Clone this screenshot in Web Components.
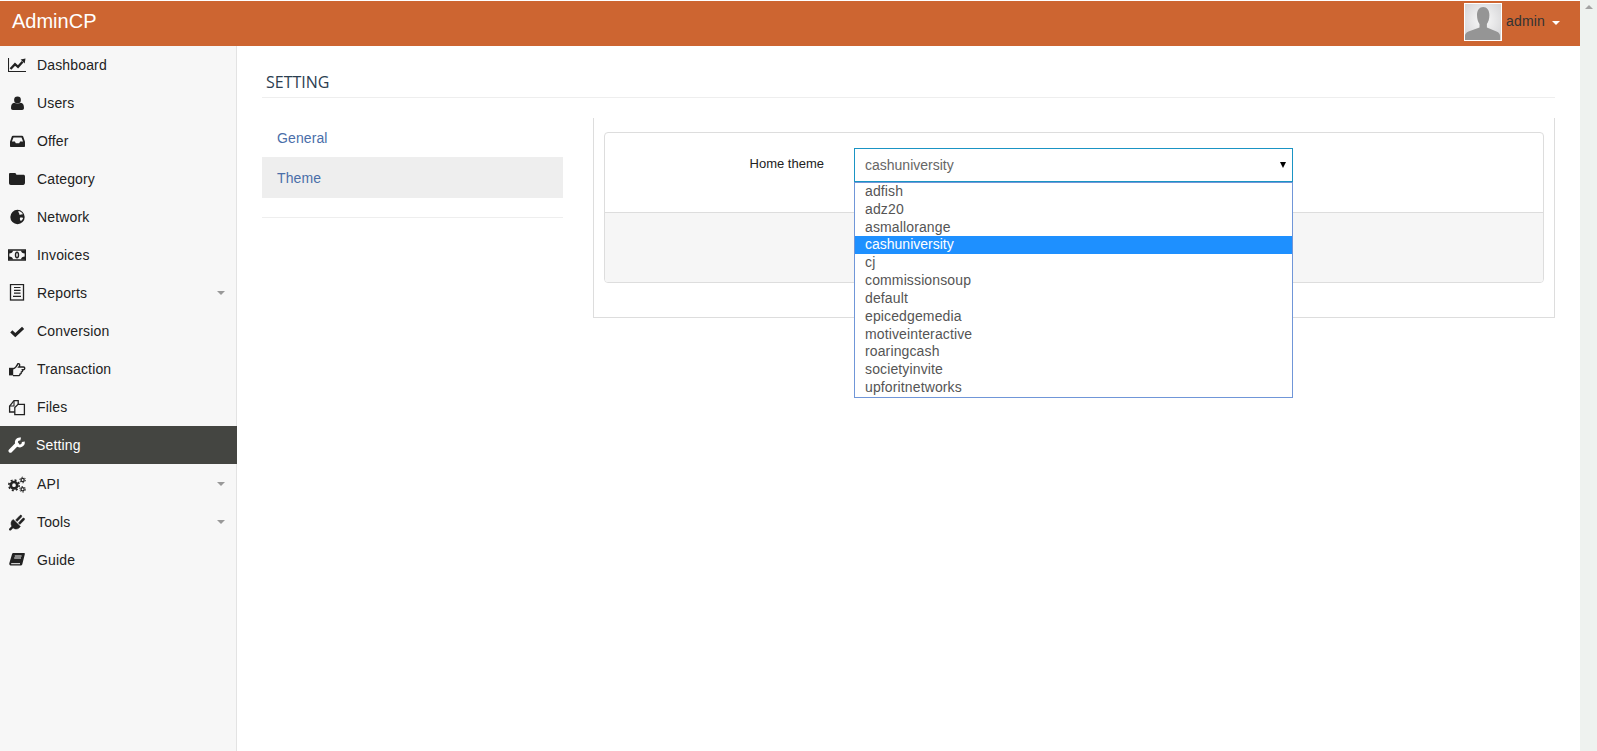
<!DOCTYPE html>
<html>
<head>
<meta charset="utf-8">
<title>AdminCP</title>
<style>
html,body{margin:0;padding:0;height:100%;overflow:hidden;background:#fff;}
body{font-family:"Liberation Sans",Arial,sans-serif;font-size:14px;color:#333;}
</style>
</head>
<body>
<admin-app>
    <admin-header slot="header" brand="AdminCP" user="admin"></admin-header>
    <side-nav slot="nav">
        <nav-item icon="chart">Dashboard</nav-item>
        <nav-item icon="user">Users</nav-item>
        <nav-item icon="inbox">Offer</nav-item>
        <nav-item icon="folder">Category</nav-item>
        <nav-item icon="globe">Network</nav-item>
        <nav-item icon="money">Invoices</nav-item>
        <nav-item icon="list" caret>Reports</nav-item>
        <nav-item icon="check">Conversion</nav-item>
        <nav-item icon="hand">Transaction</nav-item>
        <nav-item icon="files">Files</nav-item>
        <nav-item icon="wrench" active>Setting</nav-item>
        <nav-item icon="gears" caret>API</nav-item>
        <nav-item icon="plug" caret>Tools</nav-item>
        <nav-item icon="book">Guide</nav-item>
    </side-nav>
    <setting-page heading="Setting">
        <setting-tabs slot="tabs">
            <tab-link>General</tab-link>
            <tab-link active>Theme</tab-link>
        </setting-tabs>
        <form-panel>
            <theme-select label="Home theme">
                <theme-option>adfish</theme-option>
                <theme-option>adz20</theme-option>
                <theme-option>asmallorange</theme-option>
                <theme-option selected>cashuniversity</theme-option>
                <theme-option>cj</theme-option>
                <theme-option>commissionsoup</theme-option>
                <theme-option>default</theme-option>
                <theme-option>epicedgemedia</theme-option>
                <theme-option>motiveinteractive</theme-option>
                <theme-option>roaringcash</theme-option>
                <theme-option>societyinvite</theme-option>
                <theme-option>upforitnetworks</theme-option>
            </theme-select>
        </form-panel>
    </setting-page>
</admin-app>

<script>
const ICONS = {
    chart: `<path d="M.5 2v13.500H18" fill="none" stroke="currentColor" stroke-width="1.100"/><path d="M2.500 13 7 8.200l3 2.600 4.600-5" fill="none" stroke="currentColor" stroke-width="2.300"/><path d="M12.600 3.400 17.500 2.400 16.700 7.400z" fill="currentColor"/>`,
    user: `<circle cx="9.500" cy="6" r="3.400" fill="currentColor"/><path d="M3 14c0-3 1.100-5.200 3.200-5.200 1.600 1.100 5 1.100 6.600 0 2.100 0 3.200 2.200 3.200 5.200 0 1.200-.8 2-1.800 2H4.800C3.800 16 3 15.200 3 14z" fill="currentColor"/>`,
    inbox: `<path fill-rule="evenodd" d="M5 3.800h9c.6 0 1 .3 1.200.7l1.800 5.300V14c0 .7-.4 1.100-1.100 1.100H3.100C2.400 15.100 2 14.700 2 14V9.800l1.800-5.300c.2-.4.600-.7 1.200-.7zM5.500 5.500 3.900 9.600h3l.9 1.700h3.400l.9-1.700h3l-1.600-4.100z" fill="currentColor"/>`,
    folder: `<path d="M2.200 3h4.600c.6 0 1 .3 1.200.8l.4.900h6.800c1.200 0 1.800.7 1.800 1.700v6.100c0 1.400-.7 2.500-1.800 2.500H2.800C1.700 15 1 14.300 1 13V4.300C1 3.500 1.500 3 2.200 3z" fill="currentColor"/>`,
    globe: `<circle cx="9.500" cy="9" r="7.200" fill="currentColor"/><path d="M10.300 2.900c1.900.2 3.500 1.300 4.500 3-.5.700-1.100.8-1.700.3-.6.700-1.400.7-1.900 0 .2-.6 0-1.100-.5-1.400-.1-.7-.2-1.300-.4-1.900zM12 9.800c.9-.4 2-.3 3.100.1-.4 1.400-1.100 2.400-2.300 3.200-.8-.8-1.100-2.200-.8-3.300z" fill="var(--icon-paper,#f7f7f7)"/>`,
    money: `<rect x=".6" y="4" width="16.800" height="10" fill="none" stroke="currentColor" stroke-width="1.500"/><path d="M1 4.500h4c0 1.800-1.800 3-4 3zM17 4.500h-4c0 1.800 1.800 3 4 3zM1 13.500h4c0-1.800-1.800-3-4-3zM17 13.500h-4c0-1.800 1.800-3 4-3z" fill="currentColor"/><ellipse cx="9" cy="9" rx="1.500" ry="2.800" fill="none" stroke="currentColor" stroke-width="1.400"/>`,
    list: `<rect x="2.500" y=".5" width="13" height="15.500" fill="none" stroke="currentColor" stroke-width="1.300"/><path d="M6 3.500h6.500M6 6.300h6.500M6 9.100h6.500M5 12.400h8" stroke="currentColor" stroke-width="1.200"/>`,
    check: `<path d="M3.300 9.300l4 3.800 7.800-7.300" fill="none" stroke="currentColor" stroke-width="3.100"/>`,
    hand: `<path d="M1 7.800h4.200v7.600H1z" fill="currentColor"/><path d="M5 8.800C7.300 8 8.900 6 9.900 3.700c2-.5 2.300 1.900 1 3.300h4.600c1.700 0 1.700 2.700 0 2.700h-1.100c.5 1.100 0 2.200-1 2.300.1 1.200-.5 2-1.400 2.100.1 1-.8 1.500-1.700 1.500H5" fill="none" stroke="currentColor" stroke-width="1.400"/>`,
    files: `<path d="M6.800 14H1.600V8.200L6 2.600h4.200v4" fill="none" stroke="currentColor" stroke-width="1.300"/><path d="M6 3v5H1.600" fill="none" stroke="currentColor" stroke-width="1.100"/><path d="M6.800 11.500V9.600L10 6.400h6.400v10.200H6.800z" fill="none" stroke="currentColor" stroke-width="1.300"/>`,
    wrench: `<path d="M2.400 14.800 9 8.200" stroke="currentColor" stroke-width="3.800" stroke-linecap="round"/><path d="M12.700 3A3.500 3.500 0 1 0 15.300 5.800" fill="none" stroke="currentColor" stroke-width="3"/>`,
    gears: `<circle cx="6" cy="10.200" r="3.200" fill="none" stroke="currentColor" stroke-width="2.700"/><circle cx="6" cy="10.200" r="5.200" fill="none" stroke="currentColor" stroke-width="1.600" stroke-dasharray="2.040 2.040"/><circle cx="14.600" cy="5" r="1.600" fill="none" stroke="currentColor" stroke-width="1.300"/><circle cx="14.600" cy="5" r="2.800" fill="none" stroke="currentColor" stroke-width="1" stroke-dasharray="1.470 1.470"/><circle cx="14.600" cy="14.300" r="1.600" fill="none" stroke="currentColor" stroke-width="1.300"/><circle cx="14.600" cy="14.300" r="2.800" fill="none" stroke="currentColor" stroke-width="1" stroke-dasharray="1.470 1.470"/>`,
    plug: `<path d="M2.200 16.300 6 12.500" fill="none" stroke="currentColor" stroke-width="2.400" stroke-linecap="round"/><path d="M3.800 7.800 5.200 6.400l7.200 7.200-1.400 1.400c-2.400 1.800-4.600 1.100-6.200-.5-1.600-1.700-2.600-4.200-1-6.700zM7.600 7l4.400-4.600c1.100-.9 2.500.5 1.500 1.600L9.100 8.500zM10.400 9.900l4.400-4.600c1.100-.9 2.500.5 1.500 1.600l-4.400 4.500z" fill="currentColor" stroke="currentColor" stroke-width=".5"/>`,
    book: `<path d="M5.500 2H16c.6 0 1 .5.800 1.200l-2.500 10c-.2.900-1 1.400-1.900 1.400H3.500C2 14.600 1 13.800 1.300 12.300L4 3.200C4.200 2.500 4.800 2 5.500 2z" fill="currentColor"/><path d="M6.800 5h6.800M6.200 7h6.800M3.200 12.700h8.800" stroke="var(--icon-paper,#f7f7f7)" fill="none"/>`
};

class AdminApp extends HTMLElement{
    constructor(){
        super();
        this.shadowDOM = this.attachShadow({mode: 'open'});
        this.shadowDOM.innerHTML = `
        <style>
        :host{
            display: flex;
            height: 751px;
        }
        .shell{
            flex: 1;
            min-width: 0;
            display: flex;
            flex-direction: column;
            padding-top: 1px;
        }
        .body{
            flex: 1;
            display: flex;
            min-height: 0;
        }
        .main{
            flex: 1;
            min-width: 0;
        }
        .rail{
            width: 17px;
            flex: none;
            background: #eef2ef;
            display: flex;
            justify-content: center;
            padding-top: 5px;
            box-sizing: border-box;
        }
        .rail i{
            width: 0;
            height: 0;
            border-left: 4px solid transparent;
            border-right: 4px solid transparent;
            border-bottom: 4px solid #a3a3a3;
        }
        </style>
        <div class="shell">
            <slot name="header"></slot>
            <div class="body">
                <slot name="nav"></slot>
                <div class="main"><slot></slot></div>
            </div>
        </div>
        <div class="rail"><i></i></div>`;
    }
}

class AdminHeader extends HTMLElement{
    constructor(){
        super();
        this.shadowDOM = this.attachShadow({mode: 'open'});
    }
    connectedCallback(){
        this.shadowDOM.innerHTML = `
        <style>
        :host{
            display: flex;
            align-items: center;
            justify-content: space-between;
            height: 45px;
            background: #cd6531;
            padding: 0 20px 0 12px;
            flex: none;
        }
        .brand{
            color: #fff;
            font-size: 20px;
            line-height: 40px;
            margin-top: -5px;
        }
        .user{
            display: flex;
            align-items: center;
            color: #333;
            font-size: 14px;
            margin-top: -3px;
        }
        .user span:first-of-type{
            margin-top: -3px;
            letter-spacing: .15px;
        }
        svg{
            display: block;
            margin-right: 4px;
        }
        .caret{
            width: 0;
            height: 0;
            margin: 2px 0 0 7px;
            border-left: 4px solid transparent;
            border-right: 4px solid transparent;
            border-top: 4px solid #fff;
        }
        </style>
        <div class="brand">${this.getAttribute('brand')}</div>
        <div class="user">
            <svg width="38" height="38" viewBox="0 0 38 38">
                <defs><radialGradient id="bg" cx="50%" cy="45%" r="65%"><stop offset="0" stop-color="#fafafa"/><stop offset="1" stop-color="#d6d6d8"/></radialGradient></defs>
                <rect width="38" height="38" fill="#fff"/>
                <rect x="1" y="1" width="36" height="36" fill="url(#bg)"/>
                <path d="M13 12c0-5 2.500-8 6.200-8s6.200 3 6.200 8c0 4-1 7-2.500 9v3.500l9.600 4c2.500 1 3.500 2.500 3.500 4.500v4H1v-4c0-2 1.200-3.500 3.500-4.500l11-4V21c-1.500-2-2.500-5-2.500-9z" fill="#959595"/>
            </svg>
            <span>${this.getAttribute('user')}</span>
            <span class="caret"></span>
        </div>`;
    }
}

class SideNav extends HTMLElement{
    constructor(){
        super();
        this.shadowDOM = this.attachShadow({mode: 'open'});
        this.shadowDOM.innerHTML = `
        <style>
        :host{
            display: block;
            width: 237px;
            flex: none;
            box-sizing: border-box;
            background: #f7f7f7;
            border-right: 1px solid #e3e3e3;
        }
        </style>
        <slot></slot>`;
    }
}

class NavItem extends HTMLElement{
    constructor(){
        super();
        this.shadowDOM = this.attachShadow({mode: 'open'});
    }
    connectedCallback(){
        const icon = ICONS[this.getAttribute('icon')];
        this.shadowDOM.innerHTML = `
        <style>
        :host{
            display: flex;
            align-items: center;
            height: 38px;
            padding: 0 11px 0 8px;
            color: #222;
            font-size: 14px;
            letter-spacing: .15px;
        }
        :host([active]){
            background: #444541;
            color: #fff;
            margin: 0 -1px 1px 0;
            --icon-paper: #444541;
        }
        :host([active]) .label{
            margin-left: -1px;
        }
        svg{
            display: block;
            flex: none;
            width: 18px;
            height: 18px;
            margin-right: 11px;
        }
        .label{
            flex: 1;
            margin-top: -1px;
        }
        .caret{
            width: 0;
            height: 0;
            border-left: 4px solid transparent;
            border-right: 4px solid transparent;
            border-top: 4px solid #999;
        }
        </style>
        <svg viewBox="0 0 18 18">${icon}</svg>
        <span class="label"><slot></slot></span>
        ${this.hasAttribute('caret') ? '<span class="caret"></span>' : ''}`;
    }
}

class SettingPage extends HTMLElement{
    constructor(){
        super();
        this.shadowDOM = this.attachShadow({mode: 'open'});
    }
    connectedCallback(){
        this.shadowDOM.innerHTML = `
        <style>
        :host{
            display: block;
            padding: 0 25px;
        }
        h1{
            margin: 0;
            height: 52px;
            box-sizing: border-box;
            padding: 26px 0 0 4px;
            border-bottom: 1px solid #eee;
            font: 400 16px/20px "Open Sans", sans-serif;
            text-transform: uppercase;
            color: #2c3e50;
        }
        .cols{
            display: flex;
            gap: 30px;
            margin-top: 20px;
            align-items: flex-start;
        }
        .content{
            flex: 1;
            min-width: 0;
            box-sizing: border-box;
            height: 200px;
            padding: 14px 10px 0;
            border: 1px solid #ddd;
            border-top: 0;
        }
        </style>
        <h1>${this.getAttribute('heading')}</h1>
        <div class="cols">
            <slot name="tabs"></slot>
            <div class="content"><slot></slot></div>
        </div>`;
    }
}

class SettingTabs extends HTMLElement{
    constructor(){
        super();
        this.shadowDOM = this.attachShadow({mode: 'open'});
        this.shadowDOM.innerHTML = `
        <style>
        :host{
            display: block;
            width: 301px;
            flex: none;
            height: 100px;
            box-sizing: border-box;
            border-bottom: 1px solid #eee;
        }
        </style>
        <slot></slot>`;
    }
}

class TabLink extends HTMLElement{
    constructor(){
        super();
        this.shadowDOM = this.attachShadow({mode: 'open'});
        this.shadowDOM.innerHTML = `
        <style>
        :host{
            display: flex;
            align-items: center;
            height: 39px;
            padding: 0 15px;
            color: #4a6ea9;
            font-size: 14px;
            letter-spacing: .1px;
        }
        :host([active]){
            background: #eee;
            height: 41px;
        }
        </style>
        <slot></slot>`;
    }
}

class FormPanel extends HTMLElement{
    constructor(){
        super();
        this.shadowDOM = this.attachShadow({mode: 'open'});
        this.shadowDOM.innerHTML = `
        <style>
        :host{
            display: block;
            box-sizing: border-box;
            height: 151px;
            border: 1px solid #ddd;
            border-radius: 4px;
            background: #fff;
        }
        .body{
            height: 79px;
            box-sizing: border-box;
            padding-top: 15px;
        }
        .footer{
            height: 70px;
            box-sizing: border-box;
            background: #f6f6f6;
            border-top: 1px solid #ddd;
            border-radius: 0 0 3px 3px;
        }
        </style>
        <div class="body"><slot></slot></div>
        <div class="footer"></div>`;
    }
}

class ThemeSelect extends HTMLElement{
    constructor(){
        super();
        this.shadowDOM = this.attachShadow({mode: 'open'});
    }
    connectedCallback(){
        const selected = this.querySelector('theme-option[selected]');
        this.shadowDOM.innerHTML = `
        <style>
        :host{
            display: flex;
            align-items: flex-start;
        }
        label{
            width: 219px;
            flex: none;
            text-align: right;
            color: #222;
            font-size: 13px;
            line-height: 20px;
            padding-top: 6px;
        }
        .wrap{
            position: relative;
            width: 439px;
            margin-left: 30px;
        }
        .value{
            box-sizing: border-box;
            height: 34px;
            border: 1px solid #1a94c4;
            padding: 0 10px;
            display: flex;
            align-items: center;
            justify-content: space-between;
            color: #666;
            font-size: 14px;
            background: #fff;
        }
        .value i{
            width: 0;
            height: 0;
            margin: -1px -4px 0 0;
            border-left: 3.5px solid transparent;
            border-right: 3.5px solid transparent;
            border-top: 6px solid #000;
        }
        .list{
            position: absolute;
            left: 0;
            right: 0;
            top: 34px;
            box-sizing: border-box;
            height: 216px;
            border: 1px solid #7096d8;
            background: #fff;
        }
        </style>
        <label>${this.getAttribute('label')}</label>
        <div class="wrap">
            <div class="value"><span>${selected ? selected.textContent : ''}</span><i></i></div>
            <div class="list"><slot></slot></div>
        </div>`;
    }
}

class ThemeOption extends HTMLElement{
    constructor(){
        super();
        this.shadowDOM = this.attachShadow({mode: 'open'});
        this.shadowDOM.innerHTML = `
        <style>
        :host{
            display: block;
            height: 17.83px;
            line-height: 17.83px;
            padding-left: 10px;
            color: #555;
            font-size: 14px;
            letter-spacing: .13px;
        }
        :host([selected]){
            background: #1e90ff;
            color: #fff;
            letter-spacing: 0;
        }
        </style>
        <slot></slot>`;
    }
}

customElements.define('admin-app', AdminApp);
customElements.define('admin-header', AdminHeader);
customElements.define('side-nav', SideNav);
customElements.define('nav-item', NavItem);
customElements.define('setting-page', SettingPage);
customElements.define('setting-tabs', SettingTabs);
customElements.define('tab-link', TabLink);
customElements.define('form-panel', FormPanel);
customElements.define('theme-select', ThemeSelect);
customElements.define('theme-option', ThemeOption);
</script>
</body>
</html>
